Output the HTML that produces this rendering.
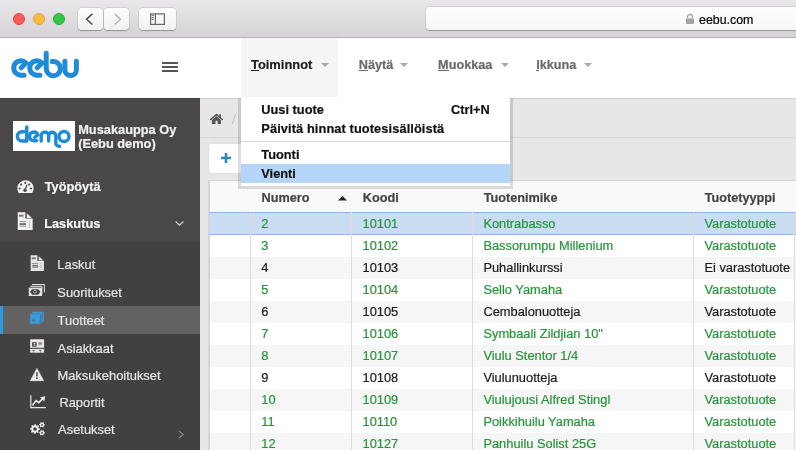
<!DOCTYPE html>
<html><head><meta charset="utf-8"><style>
*{margin:0;padding:0;box-sizing:border-box}
html,body{width:796px;height:450px;overflow:hidden;background:#fff}
body{position:relative;font-family:"Liberation Sans",sans-serif}
.t{position:absolute;white-space:nowrap;line-height:1;-webkit-text-stroke:0.2px currentColor}
.a{position:absolute}
</style></head><body><div id="root" style="position:absolute;left:0;top:0;width:796px;height:450px;will-change:transform">
<div class="a" style="left:0;top:0;width:796px;height:37px;background:linear-gradient(#e9e7e9,#d5d3d5)"></div>
<div class="a" style="left:0;top:37px;width:796px;height:1px;background:#b3b3b3"></div>
<div class="a" style="left:13px;top:13px;width:12px;height:12px;border-radius:50%;background:#fc5b57;border:0.5px solid #de4540"></div>
<div class="a" style="left:33px;top:13px;width:12px;height:12px;border-radius:50%;background:#fdbc40;border:0.5px solid #dea234"></div>
<div class="a" style="left:53px;top:13px;width:12px;height:12px;border-radius:50%;background:#33c748;border:0.5px solid #27aa35"></div>
<div class="a" style="left:78px;top:8px;width:25px;height:22px;border-radius:4px;background:linear-gradient(#fdfdfd,#f1f1f1);box-shadow:0 0.5px 1px rgba(0,0,0,0.28),0 0 0 0.5px rgba(0,0,0,0.12)"></div>
<div class="a" style="left:104px;top:8px;width:25px;height:22px;border-radius:4px;background:linear-gradient(#fdfdfd,#f1f1f1);box-shadow:0 0.5px 1px rgba(0,0,0,0.28),0 0 0 0.5px rgba(0,0,0,0.12)"></div>
<div class="a" style="left:139px;top:8px;width:37px;height:22px;border-radius:4px;background:linear-gradient(#fdfdfd,#f1f1f1);box-shadow:0 0.5px 1px rgba(0,0,0,0.28),0 0 0 0.5px rgba(0,0,0,0.12)"></div>
<svg class="a" style="left:78px;top:8px" width="25" height="22"><path d="M14.4 5.9 L8.5 11.2 L14.4 16.5" fill="none" stroke="#4a4a4a" stroke-width="1.5"/></svg>
<svg class="a" style="left:104px;top:8px" width="25" height="22"><path d="M10.9 5.9 L16.5 11.2 L10.9 16.5" fill="none" stroke="#b5b5b5" stroke-width="1.5"/></svg>
<svg class="a" style="left:139px;top:8px" width="37" height="22"><rect x="11.6" y="5.9" width="13.8" height="10.5" fill="none" stroke="#666" stroke-width="1.2"/><line x1="16.4" y1="5.9" x2="16.4" y2="16.4" stroke="#666" stroke-width="1.2"/><path d="M12.6 7.6 H14.8 M12.6 9.6 H14.8 M12.6 11.6 H14.8" stroke="#6a6a6a" stroke-width="1"/></svg>
<div class="a" style="left:425.5px;top:7px;width:400px;height:23px;border-radius:4px;background:linear-gradient(#fefefe,#f6f6f6);box-shadow:0 0.5px 1px rgba(0,0,0,0.25),0 0 0 0.5px rgba(0,0,0,0.12)"></div>
<svg class="a" style="left:685px;top:13px" width="10" height="12"><path d="M2.5 5.5 V4 A2.5 2.5 0 0 1 7.5 4 V5.5" fill="none" stroke="#a3a3a3" stroke-width="1.3"/><rect x="1" y="5.5" width="8" height="5.5" rx="0.8" fill="#a3a3a3"/></svg>
<div class="t" style="left:699.00px;top:13.50px;font-size:12.4px;color:#000;font-weight:normal;">eebu.com</div>

<div class="a" style="left:241px;top:38px;width:97px;height:59px;background:#f5f5f5"></div>
<svg class="a" style="left:0;top:0" width="100" height="98"><g fill="none" stroke="#1e8bd7" stroke-width="5" stroke-linecap="round">
<path d="M24 75.2 H20.9 A7.2 7.2 0 0 1 13.7 68 A7.2 7.2 0 0 1 26 62.9 L21.2 67.8"/>
<path d="M40 75.2 H36.9 A7.2 7.2 0 0 1 29.7 68 A7.2 7.2 0 0 1 42 62.9 L37.2 67.8"/>
<path d="M46.2 53.3 V68.6 A7.1 7.1 0 1 0 52.3 61.6"/>
<path d="M64.9 61.2 V69.8 A5.75 5.75 0 0 0 76.4 69.8 V61.2"/>
</g></svg>
<div class="a" style="left:162px;top:62px;width:16px;height:2px;background:#555"></div>
<div class="a" style="left:162px;top:66px;width:16px;height:2px;background:#555"></div>
<div class="a" style="left:162px;top:70px;width:16px;height:2px;background:#555"></div>
<div class="t" style="left:251.00px;top:59.08px;font-size:12.9px;color:#1c1c1c;font-weight:bold;">Toiminnot</div>

<div class="a" style="left:251px;top:69.8px;width:7.8px;height:1.2px;background:#222"></div>
<svg class="a" style="left:320.5px;top:63.3px" width="8" height="4"><path d="M0 0 H8 L4 4 Z" fill="#a8a8a8"/></svg>
<div class="t" style="left:358.80px;top:59.05px;font-size:12.7px;color:#6a6a6a;font-weight:bold;">Näytä</div>

<div class="a" style="left:358.8px;top:69.8px;width:9px;height:1.1px;background:#6a6a6a"></div>
<svg class="a" style="left:400.3px;top:63.3px" width="8" height="4"><path d="M0 0 H8 L4 4 Z" fill="#a8a8a8"/></svg>
<div class="t" style="left:438.10px;top:59.05px;font-size:12.7px;color:#6a6a6a;font-weight:bold;">Muokkaa</div>

<div class="a" style="left:438.1px;top:69.8px;width:10.5px;height:1.1px;background:#6a6a6a"></div>
<svg class="a" style="left:501.2px;top:63.3px" width="8" height="4"><path d="M0 0 H8 L4 4 Z" fill="#a8a8a8"/></svg>
<div class="t" style="left:536.20px;top:59.05px;font-size:12.7px;color:#6a6a6a;font-weight:bold;">Ikkuna</div>

<div class="a" style="left:536.2px;top:69.8px;width:3.3px;height:1.1px;background:#6a6a6a"></div>
<svg class="a" style="left:584.3px;top:63.3px" width="8" height="4"><path d="M0 0 H8 L4 4 Z" fill="#a8a8a8"/></svg>
<div class="a" style="left:0;top:98px;width:200px;height:352px;background:#4a4847"></div>
<div class="a" style="left:0;top:241px;width:200px;height:209px;background:#434140"></div>
<div class="a" style="left:13px;top:121px;width:62px;height:30px;background:#fff"></div>
<svg class="a" style="left:13px;top:121px" width="62" height="30"><g fill="none" stroke="#1e8bd7" stroke-width="3.4" stroke-linecap="round">
<path d="M13.75 6 V19.9"/>
<path d="M11 10.7 H9 A4.65 4.65 0 0 0 9 20 H13.75"/>
<path d="M23.6 19.75 H20.8 A4.35 4.35 0 0 1 16.45 15.4 A4.35 4.35 0 0 1 24.88 13.9 L21.6 16.3"/>
<path d="M28.2 20 V14.7 A3.72 3.72 0 0 1 35.65 14.7 V20 M35.65 14.7 A3.58 3.58 0 0 1 42.8 14.7 V22.2 A3 3 0 0 0 45.8 25.2 H46.6"/>
<circle cx="51" cy="15.5" r="5"/>
</g></svg>
<div class="t" style="left:78.20px;top:123.56px;font-size:12.8px;color:#f2f2f2;font-weight:bold;">Musakauppa Oy</div>

<div class="t" style="left:78.20px;top:137.96px;font-size:12.8px;color:#f2f2f2;font-weight:bold;">(Eebu demo)</div>

<div class="t" style="left:44.70px;top:180.66px;font-size:12.8px;color:#f5f5f5;font-weight:bold;">Työpöytä</div>

<div class="t" style="left:44.20px;top:218.06px;font-size:12.8px;color:#f5f5f5;font-weight:bold;">Laskutus</div>

<svg class="a" style="left:175px;top:220px" width="9" height="6"><path d="M0.6 1.5 L4.5 5.1 L8.4 1.5" fill="none" stroke="#d4d4d4" stroke-width="1.2"/></svg>
<div class="a" style="left:0;top:306px;width:200px;height:28px;background:#626262"></div>
<div class="a" style="left:0;top:306px;width:3px;height:28px;background:#2e9ae0"></div>
<div class="t" style="left:57.30px;top:258.98px;font-size:12.9px;color:#e6e6e6;font-weight:normal;">Laskut</div>

<div class="t" style="left:57.30px;top:286.68px;font-size:12.9px;color:#e6e6e6;font-weight:normal;">Suoritukset</div>

<div class="t" style="left:57.60px;top:314.58px;font-size:12.9px;color:#e6e6e6;font-weight:normal;">Tuotteet</div>

<div class="t" style="left:57.60px;top:342.78px;font-size:12.9px;color:#e6e6e6;font-weight:normal;">Asiakkaat</div>

<div class="t" style="left:57.40px;top:370.08px;font-size:12.9px;color:#e6e6e6;font-weight:normal;">Maksukehoitukset</div>

<div class="t" style="left:59.40px;top:396.98px;font-size:12.9px;color:#e6e6e6;font-weight:normal;">Raportit</div>

<div class="t" style="left:58.10px;top:424.08px;font-size:12.9px;color:#e6e6e6;font-weight:normal;">Asetukset</div>

<svg class="a" style="left:178px;top:430px" width="6" height="9"><path d="M1 1 L5.2 4.5 L1 8" fill="none" stroke="#8a8a8a" stroke-width="1.1"/></svg>
<svg class="a" style="left:14px;top:177px" width="24" height="20">
<path d="M4.69 16 A8.15 8.15 0 1 1 18.21 16 Z" fill="#f2f2f2"/>
<g fill="#4a4847"><circle cx="11.3" cy="5.8" r="1.1"/><circle cx="7.1" cy="7.6" r="1.1"/><circle cx="15.1" cy="7.6" r="1.1"/><circle cx="5.6" cy="11.5" r="1.1"/><circle cx="16.9" cy="11.5" r="1.1"/><circle cx="11" cy="13.3" r="1.7"/></g>
<path d="M11 13.2 L12.8 8.2" stroke="#4a4847" stroke-width="1.2" stroke-linecap="round"/>
</svg>
<svg class="a" style="left:17.2px;top:211.9px" width="17" height="19"><path d="M0.75 0.3 H8.3 V6.6 H15.65 V18.1 H0.75 Z" fill="#f2f2f2"/><path d="M9.8 1.3 V5.9 H14.9 Z" fill="#f2f2f2"/>
<g fill="#767676"><rect x="2" y="2.7" width="4.6" height="2"/><rect x="2.5" y="9.3" width="6.6" height="0.8"/><rect x="2.5" y="11.1" width="6.6" height="1.9"/><rect x="2.5" y="13.7" width="6.6" height="0.8"/><rect x="11.9" y="9.3" width="0.7" height="1.1"/><rect x="11.9" y="11.4" width="0.7" height="1.3"/><rect x="11.9" y="13.6" width="0.7" height="1.0"/><rect x="11.9" y="15.0" width="0.7" height="0.7"/></g></svg>
<svg class="a" style="left:29.63px;top:254.9px" width="15" height="17"><g transform="scale(0.89)"><path d="M0.75 0.3 H8.3 V6.6 H15.65 V18.1 H0.75 Z" fill="#e4e4e4"/><path d="M9.8 1.3 V5.9 H14.9 Z" fill="#e4e4e4"/>
<g fill="#767676"><rect x="2" y="2.7" width="4.6" height="2"/><rect x="2.5" y="9.3" width="6.6" height="0.8"/><rect x="2.5" y="11.1" width="6.6" height="1.9"/><rect x="2.5" y="13.7" width="6.6" height="0.8"/><rect x="11.9" y="9.3" width="0.7" height="1.1"/><rect x="11.9" y="11.4" width="0.7" height="1.3"/><rect x="11.9" y="13.6" width="0.7" height="1.0"/><rect x="11.9" y="15.0" width="0.7" height="0.7"/></g></g></svg>
<svg class="a" style="left:27px;top:281px" width="20" height="18">
<path d="M5 3.5 H17.4 V11.4" fill="none" stroke="#e4e4e4" stroke-width="1"/>
<path d="M3.4 5.3 H14.9 V13.2" fill="none" stroke="#e4e4e4" stroke-width="1"/>
<rect x="1.8" y="6.6" width="13.2" height="8.4" fill="#e4e4e4"/>
<path d="M3 10.7 L5.2 8.2 H11.2 L13.4 10.7 L11.2 13.8 H5.2 Z" fill="#434140"/>
<circle cx="8" cy="10.8" r="1.5" fill="none" stroke="#bdbdbd" stroke-width="0.8"/>
</svg>
<svg class="a" style="left:27px;top:308px" width="20" height="20">
<path d="M3.1 7.1 L6.2 3.8 H16.8 V13.3 L13.1 15.8 H3.1 Z" fill="#3a9be0"/>
<path d="M4.4 5.9 H14.3 L16.6 3.9" fill="none" stroke="#626262" stroke-width="0.6"/>
<path d="M13.45 7.1 V15.8 M15.35 5.6 V14.4" fill="none" stroke="#626262" stroke-width="0.7"/>
<path d="M5 10.5 h1.1 v1.2 h1.2 v-1.2 h1.1 v2.8 h-3.4 Z" fill="#4d6f8a"/>
</svg>
<svg class="a" style="left:27px;top:336px" width="20" height="20">
<rect x="3.1" y="3.3" width="14" height="13.4" rx="0.8" fill="#e8e8e8"/>
<rect x="5.1" y="6.2" width="4.5" height="4.5" fill="#434140"/>
<circle cx="7.4" cy="7.7" r="0.9" fill="#e8e8e8"/><path d="M5.8 10 Q7.4 8.6 9 10 Z" fill="#e8e8e8"/>
<rect x="11.3" y="6.2" width="3.6" height="2.5" fill="#8a8a8a"/>
<rect x="11.3" y="9.1" width="3.8" height="0.4" fill="#bdbdbd"/>
<rect x="3.1" y="11.8" width="14" height="1.1" fill="#434140"/>
<rect x="5.3" y="14" width="2.5" height="0.7" fill="#434140"/><rect x="6.5" y="14.5" width="0.5" height="2.2" fill="#555"/>
<rect x="12" y="14" width="2.5" height="0.7" fill="#434140"/><rect x="13.2" y="14.5" width="0.5" height="2.2" fill="#555"/>
</svg>
<svg class="a" style="left:28px;top:366px" width="18" height="17">
<path d="M8.95 2.4 L15.6 14.7 H2.3 Z" fill="#ececec" stroke="#ececec" stroke-width="0.6" stroke-linejoin="round"/>
<rect x="8.2" y="6.3" width="1.5" height="4.2" fill="#434140"/><rect x="8.2" y="11.4" width="1.5" height="1.6" fill="#434140"/>
</svg>
<svg class="a" style="left:28px;top:393px" width="20" height="17">
<path d="M2.8 2.2 V14.7 H17.9" fill="none" stroke="#e8e8e8" stroke-width="1.2"/>
<path d="M4.4 12.4 L8.1 7.6 L10.7 9.7 L14.8 5.7" fill="none" stroke="#e8e8e8" stroke-width="1.7"/>
<path d="M17.2 3.3 L12.1 4.2 L16.3 8.4 Z" fill="#e8e8e8"/>
</svg>
<svg class="a" style="left:28px;top:420px" width="19" height="17"><polygon points="11.89,8.76 11.85,9.72 10.48,10.25 10.17,10.90 10.63,12.29 9.92,12.94 8.58,12.34 7.90,12.59 7.24,13.89 6.28,13.85 5.75,12.48 5.10,12.17 3.71,12.63 3.06,11.92 3.66,10.58 3.41,9.90 2.11,9.24 2.15,8.28 3.52,7.75 3.83,7.10 3.37,5.71 4.08,5.06 5.42,5.66 6.10,5.41 6.76,4.11 7.72,4.15 8.25,5.52 8.90,5.83 10.29,5.37 10.94,6.08 10.34,7.42 10.59,8.10" fill="#ececec"/><circle cx="7" cy="9" r="1.8" fill="#434140"/><polygon points="16.89,4.61 16.84,5.37 15.88,5.73 15.58,6.18 15.61,7.21 14.93,7.55 14.14,6.90 13.59,6.86 12.72,7.40 12.09,6.98 12.25,5.97 12.01,5.48 11.11,4.99 11.16,4.23 12.12,3.87 12.42,3.42 12.39,2.39 13.07,2.05 13.86,2.70 14.41,2.74 15.28,2.20 15.91,2.62 15.75,3.63 15.99,4.12" fill="#ececec"/><circle cx="14" cy="4.8" r="0.9" fill="#434140"/><polygon points="16.89,12.61 16.84,13.37 15.88,13.73 15.58,14.18 15.61,15.21 14.93,15.55 14.14,14.90 13.59,14.86 12.72,15.40 12.09,14.98 12.25,13.97 12.01,13.48 11.11,12.99 11.16,12.23 12.12,11.87 12.42,11.42 12.39,10.39 13.07,10.05 13.86,10.70 14.41,10.74 15.28,10.20 15.91,10.62 15.75,11.63 15.99,12.12" fill="#ececec"/><circle cx="14" cy="12.8" r="0.9" fill="#434140"/></svg>
<div class="a" style="left:200px;top:98px;width:596px;height:352px;background:#e7e7e7"></div>
<div class="a" style="left:200px;top:137px;width:596px;height:1px;background:#d6d6d6"></div>
<svg class="a" style="left:210px;top:113px" width="14" height="12"><rect x="9.2" y="1.2" width="1.7" height="3.6" fill="#555"/><path d="M0.7 6.5 L6.5 1.6 L12.3 6.5" fill="none" stroke="#555" stroke-width="1.5" stroke-linecap="round"/><path d="M1.9 6.9 L6.5 3.2 L10.9 6.9 V10.9 H7.7 V7.7 H5.5 V10.9 H1.9 Z" fill="#555"/></svg>
<svg class="a" style="left:231px;top:113px" width="6" height="12"><path d="M4.6 1.1 L1.2 10.9" stroke="#b8b8b8" stroke-width="0.8"/></svg>
<div class="a" style="left:209px;top:143.7px;width:60px;height:29.6px;background:#fff;border-radius:3px;box-shadow:0 0 0 0.5px #d8d8d8"></div>
<svg class="a" style="left:221px;top:153px" width="10" height="10"><path d="M5 0 V10 M0 5 H10" stroke="#3585b3" stroke-width="2.6"/></svg>
<div class="a" style="left:208px;top:180px;width:600px;height:280px;background:#fff;border-left:2px solid #d6d6d6;border-top:1px solid #d6d6d6"></div>
<div class="a" style="left:210px;top:181px;width:590px;height:31px;background:#f9f9f9"></div>
<div class="a" style="left:208.5px;top:212.10px;width:592px;height:23px;background:#c9dcf2;border-top:1px solid #8fb6e4;border-bottom:1px solid #8fb6e4"></div>
<div class="a" style="left:210px;top:256.60px;width:590px;height:22px;background:#f6f6f6"></div>
<div class="a" style="left:210px;top:300.60px;width:590px;height:22px;background:#f6f6f6"></div>
<div class="a" style="left:210px;top:344.60px;width:590px;height:22px;background:#f6f6f6"></div>
<div class="a" style="left:210px;top:388.60px;width:590px;height:22px;background:#f6f6f6"></div>
<div class="a" style="left:210px;top:432.60px;width:590px;height:22px;background:#f6f6f6"></div>
<div class="a" style="left:250.00px;top:212px;width:1px;height:240px;background:#dcdcdc"></div>
<div class="a" style="left:351.00px;top:212px;width:1px;height:240px;background:#dcdcdc"></div>
<div class="a" style="left:472.00px;top:212px;width:1px;height:240px;background:#dcdcdc"></div>
<div class="a" style="left:693.00px;top:212px;width:1px;height:240px;background:#dcdcdc"></div>
<div class="a" style="left:794.00px;top:212px;width:1px;height:240px;background:#dcdcdc"></div>
<div class="t" style="left:261.60px;top:191.75px;font-size:12.7px;color:#444;font-weight:bold;">Numero</div>

<div class="t" style="left:362.80px;top:191.75px;font-size:12.7px;color:#444;font-weight:bold;">Koodi</div>

<div class="t" style="left:483.70px;top:191.75px;font-size:12.7px;color:#444;font-weight:bold;">Tuotenimike</div>

<div class="t" style="left:704.70px;top:191.75px;font-size:12.7px;color:#444;font-weight:bold;">Tuotetyyppi</div>

<svg class="a" style="left:337.7px;top:196px" width="9" height="5"><path d="M0 4.5 L4.5 0 L9 4.5 Z" fill="#222"/></svg>
<div class="t" style="left:261.30px;top:217.52px;font-size:12.85px;color:#27943b;font-weight:normal;">2</div>

<div class="t" style="left:362.50px;top:217.52px;font-size:12.85px;color:#27943b;font-weight:normal;">10101</div>

<div class="t" style="left:483.40px;top:217.52px;font-size:12.85px;color:#27943b;font-weight:normal;">Kontrabasso</div>

<div class="t" style="left:704.40px;top:217.52px;font-size:12.85px;color:#27943b;font-weight:normal;">Varastotuote</div>

<div class="t" style="left:261.30px;top:239.52px;font-size:12.85px;color:#27943b;font-weight:normal;">3</div>

<div class="t" style="left:362.50px;top:239.52px;font-size:12.85px;color:#27943b;font-weight:normal;">10102</div>

<div class="t" style="left:483.40px;top:239.52px;font-size:12.85px;color:#27943b;font-weight:normal;">Bassorumpu Millenium</div>

<div class="t" style="left:704.40px;top:239.52px;font-size:12.85px;color:#27943b;font-weight:normal;">Varastotuote</div>

<div class="t" style="left:261.30px;top:261.52px;font-size:12.85px;color:#1a1a1a;font-weight:normal;">4</div>

<div class="t" style="left:362.50px;top:261.52px;font-size:12.85px;color:#1a1a1a;font-weight:normal;">10103</div>

<div class="t" style="left:483.40px;top:261.52px;font-size:12.85px;color:#1a1a1a;font-weight:normal;">Puhallinkurssi</div>

<div class="t" style="left:704.40px;top:261.52px;font-size:12.85px;color:#1a1a1a;font-weight:normal;">Ei varastotuote</div>

<div class="t" style="left:261.30px;top:283.52px;font-size:12.85px;color:#27943b;font-weight:normal;">5</div>

<div class="t" style="left:362.50px;top:283.52px;font-size:12.85px;color:#27943b;font-weight:normal;">10104</div>

<div class="t" style="left:483.40px;top:283.52px;font-size:12.85px;color:#27943b;font-weight:normal;">Sello Yamaha</div>

<div class="t" style="left:704.40px;top:283.52px;font-size:12.85px;color:#27943b;font-weight:normal;">Varastotuote</div>

<div class="t" style="left:261.30px;top:305.52px;font-size:12.85px;color:#1a1a1a;font-weight:normal;">6</div>

<div class="t" style="left:362.50px;top:305.52px;font-size:12.85px;color:#1a1a1a;font-weight:normal;">10105</div>

<div class="t" style="left:483.40px;top:305.52px;font-size:12.85px;color:#1a1a1a;font-weight:normal;">Cembalonuotteja</div>

<div class="t" style="left:704.40px;top:305.52px;font-size:12.85px;color:#1a1a1a;font-weight:normal;">Varastotuote</div>

<div class="t" style="left:261.30px;top:327.52px;font-size:12.85px;color:#27943b;font-weight:normal;">7</div>

<div class="t" style="left:362.50px;top:327.52px;font-size:12.85px;color:#27943b;font-weight:normal;">10106</div>

<div class="t" style="left:483.40px;top:327.52px;font-size:12.85px;color:#27943b;font-weight:normal;">Symbaali Zildjian 10&quot;</div>

<div class="t" style="left:704.40px;top:327.52px;font-size:12.85px;color:#27943b;font-weight:normal;">Varastotuote</div>

<div class="t" style="left:261.30px;top:349.52px;font-size:12.85px;color:#27943b;font-weight:normal;">8</div>

<div class="t" style="left:362.50px;top:349.52px;font-size:12.85px;color:#27943b;font-weight:normal;">10107</div>

<div class="t" style="left:483.40px;top:349.52px;font-size:12.85px;color:#27943b;font-weight:normal;">Viulu Stentor 1/4</div>

<div class="t" style="left:704.40px;top:349.52px;font-size:12.85px;color:#27943b;font-weight:normal;">Varastotuote</div>

<div class="t" style="left:261.30px;top:371.52px;font-size:12.85px;color:#1a1a1a;font-weight:normal;">9</div>

<div class="t" style="left:362.50px;top:371.52px;font-size:12.85px;color:#1a1a1a;font-weight:normal;">10108</div>

<div class="t" style="left:483.40px;top:371.52px;font-size:12.85px;color:#1a1a1a;font-weight:normal;">Viulunuotteja</div>

<div class="t" style="left:704.40px;top:371.52px;font-size:12.85px;color:#1a1a1a;font-weight:normal;">Varastotuote</div>

<div class="t" style="left:261.30px;top:393.52px;font-size:12.85px;color:#27943b;font-weight:normal;">10</div>

<div class="t" style="left:362.50px;top:393.52px;font-size:12.85px;color:#27943b;font-weight:normal;">10109</div>

<div class="t" style="left:483.40px;top:393.52px;font-size:12.85px;color:#27943b;font-weight:normal;">Viulujousi Alfred Stingl</div>

<div class="t" style="left:704.40px;top:393.52px;font-size:12.85px;color:#27943b;font-weight:normal;">Varastotuote</div>

<div class="t" style="left:261.30px;top:415.52px;font-size:12.85px;color:#27943b;font-weight:normal;">11</div>

<div class="t" style="left:362.50px;top:415.52px;font-size:12.85px;color:#27943b;font-weight:normal;">10110</div>

<div class="t" style="left:483.40px;top:415.52px;font-size:12.85px;color:#27943b;font-weight:normal;">Poikkihuilu Yamaha</div>

<div class="t" style="left:704.40px;top:415.52px;font-size:12.85px;color:#27943b;font-weight:normal;">Varastotuote</div>

<div class="t" style="left:261.30px;top:437.52px;font-size:12.85px;color:#27943b;font-weight:normal;">12</div>

<div class="t" style="left:362.50px;top:437.52px;font-size:12.85px;color:#27943b;font-weight:normal;">10127</div>

<div class="t" style="left:483.40px;top:437.52px;font-size:12.85px;color:#27943b;font-weight:normal;">Panhuilu Solist 25G</div>

<div class="t" style="left:704.40px;top:437.52px;font-size:12.85px;color:#27943b;font-weight:normal;">Varastotuote</div>

<div class="a" style="left:0;top:98px;width:796px;height:1px;background:rgba(0,0,0,0.1)"></div>
<div class="a" style="left:238px;top:98px;width:275px;height:90.6px;background:rgba(0,0,0,0.13)"></div>
<div class="a" style="left:241px;top:98px;width:269px;height:88px;background:#fff"></div>
<div class="a" style="left:241px;top:140.5px;width:269px;height:1px;background:#d8d8d8"></div>
<div class="a" style="left:241px;top:164px;width:269px;height:18.7px;background:#b4d5f8"></div>
<div class="t" style="left:261.30px;top:104.26px;font-size:12.8px;color:#111;font-weight:bold;">Uusi tuote</div>

<div class="t" style="left:451.00px;top:104.26px;font-size:12.8px;color:#111;font-weight:bold;">Ctrl+N</div>

<div class="t" style="left:261.30px;top:123.26px;font-size:12.8px;color:#111;font-weight:bold;letter-spacing:0.1px">Päivitä hinnat tuotesisällöistä</div>

<div class="t" style="left:261.30px;top:148.96px;font-size:12.8px;color:#111;font-weight:bold;">Tuonti</div>

<div class="t" style="left:261.30px;top:167.96px;font-size:12.8px;color:#111;font-weight:bold;">Vienti</div>

</div></body></html>
